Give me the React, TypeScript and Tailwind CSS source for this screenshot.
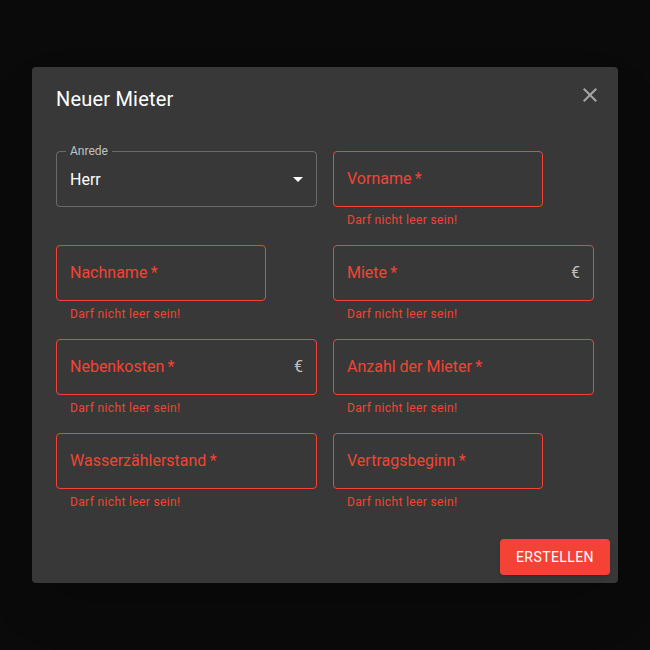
import React from 'react';

type FieldProps = {
  label: string;
  narrow?: boolean;
  adornment?: string;
};

const ErrorField: React.FC<FieldProps> = ({ label, narrow, adornment }) => (
  <div className={narrow ? 'w-[210px]' : 'w-full'}>
    <div className="h-[56px] rounded border border-[#f44336] flex items-center justify-between px-[13px]">
      <span className="text-base text-[#f44336]">{label}&thinsp;*</span>
      {adornment && <span className="text-base text-white/70">{adornment}</span>}
    </div>
    <p className="mt-[3px] mx-[14px] text-xs leading-[20px] tracking-[0.03em] text-[#f44336]">Darf nicht leer sein!</p>
  </div>
);

const App: React.FC = () => {
  return (
    <div className="w-[650px] h-[650px] bg-[#0a0a0a] flex items-center justify-center" style={{ fontFamily: 'Roboto, "Noto Sans", sans-serif' }}>
      <div className="relative w-[586px] bg-[#383838] rounded shadow-2xl">
        <h2 className="px-6 pt-4 text-xl font-normal leading-8 text-white tracking-[0.01em]">Neuer Mieter</h2>
        <button className="absolute top-2 right-2 w-10 h-10 flex items-center justify-center text-white/55">
          <svg viewBox="0 0 24 24" className="w-6 h-6" fill="currentColor">
            <path d="M19 6.41 17.59 5 12 10.59 6.41 5 5 6.41 10.59 12 5 17.59 6.41 19 12 13.41 17.59 19 19 17.59 13.41 12z" />
          </svg>
        </button>

        <div className="px-6 pt-[36px] pb-[19px] grid grid-cols-2 gap-x-4 gap-y-[15px]">
          <div className="relative">
            <div className="h-[56px] rounded border border-white/25 flex items-center justify-between pl-[13px] pr-[6px]">
              <span className="text-base text-white mt-[2px]">Herr</span>
              <svg viewBox="0 0 24 24" className="w-6 h-6 text-white" fill="currentColor">
                <path d="M7 10l5 5 5-5z" />
              </svg>
            </div>
            <span className="absolute left-[10px] -top-[8px] px-1 bg-[#383838] text-xs leading-4 text-white/70">Anrede</span>
          </div>
          <ErrorField label="Vorname" narrow />
          <ErrorField label="Nachname" narrow />
          <ErrorField label="Miete" adornment="€" />
          <ErrorField label="Nebenkosten" adornment="€" />
          <ErrorField label="Anzahl der Mieter" />
          <ErrorField label="Wasserzählerstand" />
          <ErrorField label="Vertragsbeginn" narrow />
        </div>

        <div className="p-2 flex justify-end">
          <button className="h-9 px-4 rounded bg-[#f44336] text-white text-sm font-normal uppercase tracking-[0.03em] shadow-md">
            Erstellen
          </button>
        </div>
      </div>
    </div>
  );
};

export default App;
